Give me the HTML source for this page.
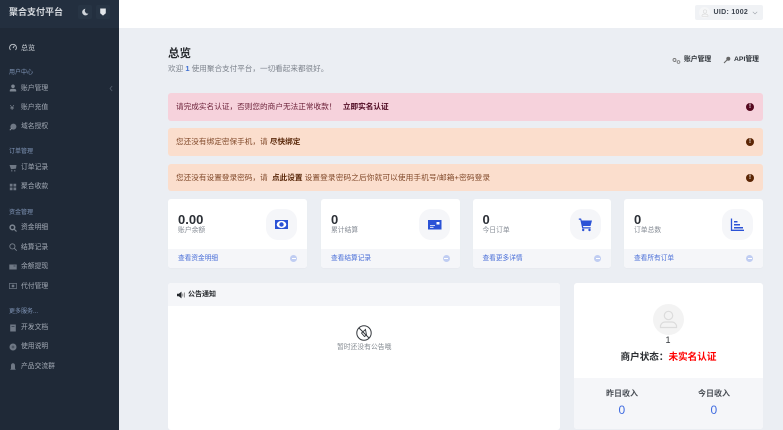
<!DOCTYPE html>
<html lang="zh-CN"><head><meta charset="utf-8"><title>总览</title>
<style>
*{box-sizing:border-box}
html,body{margin:0;padding:0;overflow:hidden}
html{height:430px}
body{width:783px;height:430px;overflow:hidden;position:relative;background:#ebeef3;font-family:"Liberation Sans","Noto Sans CJK SC",sans-serif;color:#343a40}
.a{position:absolute;white-space:nowrap;line-height:1;filter:blur(.25px)}
.side{position:absolute;left:0;top:0;width:119px;height:430px;background:#1f2937}
.brand{position:absolute;left:0;top:0;width:119px;height:28px;background:#232f3f}
.hb{position:absolute;top:5px;width:14px;height:14px;border-radius:2px;background:#273444}
.group{position:absolute;left:9px;font-size:6px;line-height:1;color:#8196b8;white-space:nowrap;filter:blur(.25px);margin-top:1px}
.item{position:absolute;left:21px;font-size:6.8px;line-height:1;color:#a3aab5;white-space:nowrap;filter:blur(.25px);margin-top:1px}
.ic{position:absolute;left:9px;width:8px;height:8px}
.alert{position:absolute;left:168px;width:595px;height:27.5px;border-radius:3px;font-size:7.65px;line-height:27.5px;padding-left:8px;white-space:nowrap}
.alert .t{filter:blur(.25px);display:inline-block}
.alert b{font-weight:700}
.red{background:#f6d2dc;color:#6b2038}
.red b{color:#4f0a22}
.org{background:#fbdecd;color:#81492a}
.org b{color:#5c2a0c}
.dot{position:absolute;right:9px;top:10px;width:8px;height:8px;border-radius:50%;color:#fff;font-size:6px;line-height:8px;text-align:center;font-weight:700}
.card{position:absolute;top:199px;height:69px;background:#fff;border-radius:3px;overflow:hidden;box-shadow:0 1px 1px rgba(0,0,0,.02)}
.card .n{position:absolute;left:10px;top:13.500px;font-size:13px;font-weight:700;color:#2b2f36;line-height:1;filter:blur(.25px)}
.card .l{position:absolute;left:10px;top:29px;font-size:6.800px;color:#858b94;line-height:1;white-space:nowrap;filter:blur(.25px)}
.card .box{position:absolute;right:10px;top:9.500px;width:31px;height:31px;border-radius:12px;background:#f5f6f9}
.card .box svg{position:absolute;left:8px;top:8px;width:15px;height:15px}
.card .f{position:absolute;left:0;right:0;top:50px;height:19px;background:#f5f6f9;font-size:6.700px;line-height:19px;padding-left:10px;color:#4a6fd8;white-space:nowrap}
.card .f span{filter:blur(.25px);display:inline-block}
.card .f i{position:absolute;right:10px;top:6px;width:7px;height:7px;border-radius:50%;background:#c0cdf2}
.card .f i:after{content:"";position:absolute;left:1.500px;top:3px;width:4px;height:1px;background:#fff}
</style></head><body>

<div style="position:absolute;left:119px;top:0;width:664px;height:28px;background:#fff"></div>

<div class="side">
<div class="brand"></div>
<div class="a" style="left:9px;top:8px;font-size:9px;font-weight:700;color:#d5d9de">聚合支付平台</div>
<div class="hb" style="left:78px"></div><div class="hb" style="left:96px"></div>
<svg class="a" style="left:81px;top:8px" width="8" height="8" viewBox="0 0 8 8"><path d="M4.500.800A3.300 3.300 0 1 0 7.400 5.600 3 3 0 0 1 4.500.800z" fill="#cfd4da"/></svg>
<svg class="a" style="left:99px;top:8px" width="8" height="8" viewBox="0 0 8 8"><path d="M1.200.500h5.600v4.700L4 7.600 1.200 5.200z" fill="#e3e6ea"/></svg>

<svg class="ic" style="top:43px" viewBox="0 0 8 8"><path d="M1.500 7A3.400 3.400 0 1 1 6.500 7" fill="none" stroke="#c4c9d0" stroke-width=".9"/><path d="M4 5l1.400-2.200" stroke="#c4c9d0" stroke-width=".9"/></svg>
<div class="item" style="top:43.500px;color:#cdd2d8;font-size:7px">总览</div>

<div class="group" style="top:69px">用户中心</div>
<svg class="ic" style="top:84px" viewBox="0 0 8 8"><circle cx="4" cy="2.300" r="1.800" fill="#7d8692"/><path d="M.800 7.500h6.400V6Q6.500 4.800 4 4.800T.800 6z" fill="#7d8692"/></svg>
<div class="item" style="top:84.500px">账户管理</div>
<svg class="a" style="left:109px;top:85px" width="4" height="7" viewBox="0 0 4 7"><path d="M3.200 1L1 3.500 3.200 6" fill="none" stroke="#56606e" stroke-width=".7"/></svg>
<div class="a" style="left:10px;top:103.500px;font-size:7.500px;color:#7d8692">¥</div>
<div class="item" style="top:103.500px">账户充值</div>
<svg class="ic" style="top:123px" viewBox="0 0 8 8"><circle cx="4.400" cy="3.600" r="3" fill="#6f7885"/><path d="M.800 7.200L3 5" stroke="#8b939e"/></svg>
<div class="item" style="top:123px">域名授权</div>

<div class="group" style="top:148px">订单管理</div>
<svg class="ic" style="top:164px" viewBox="0 0 8 8"><path d="M.500 1h7L7 4.600 2 5.300zM2.300 6h1v1.500h-1zM5.300 6h1v1.500h-1z" fill="#6f7885"/></svg>
<div class="item" style="top:163.500px">订单记录</div>
<svg class="ic" style="top:183px" viewBox="0 0 8 8"><path d="M.800.800h2.700v2.700H.800zM4.500.800h2.700v2.700H4.500zM.800 4.500h2.700v2.700H.800zM4.500 4.500h2.700v2.700H4.500z" fill="#6f7885"/></svg>
<div class="item" style="top:183px">聚合收款</div>

<div class="group" style="top:208.500px">资金管理</div>
<svg class="ic" style="top:224px" viewBox="0 0 8 8"><circle cx="3.400" cy="3.400" r="2.300" fill="none" stroke="#7d8692" stroke-width="1.500"/><path d="M5 5l2.500 2.500" stroke="#7d8692" stroke-width="1.200"/></svg>
<div class="item" style="top:224px">资金明细</div>
<svg class="ic" style="top:243px" viewBox="0 0 8 8"><circle cx="3.400" cy="3.400" r="2.600" fill="none" stroke="#7d8692" stroke-width=".8"/><path d="M5.200 5.200l2.500 2.500" stroke="#7d8692" stroke-width=".8"/></svg>
<div class="item" style="top:243.500px">结算记录</div>
<svg class="ic" style="top:263px" viewBox="0 0 8 8"><path d="M.300 1.500h7.400v5H.300z" fill="#6f7885"/><path d="M4.500 3h2" stroke="#1f2937" stroke-width=".6"/></svg>
<div class="item" style="top:263px">余额提现</div>
<svg class="ic" style="top:282px" viewBox="0 0 8 8"><path d="M.300 1.500h7.400v5H.300z" fill="none" stroke="#6f7885" stroke-width=".8"/><circle cx="4" cy="4" r="1.400" fill="#6f7885"/></svg>
<div class="item" style="top:282.500px">代付管理</div>

<div class="group" style="top:308px">更多服务...</div>
<svg class="ic" style="top:323.500px" viewBox="0 0 8 8"><path d="M1.200.500h5.600v7H1.200z" fill="#6f7885"/><path d="M2.500 2.500h3" stroke="#1f2937" stroke-width=".6"/></svg>
<div class="item" style="top:324px">开发文档</div>
<svg class="ic" style="top:343px" viewBox="0 0 8 8"><circle cx="4" cy="4" r="3.500" fill="#6f7885"/><path d="M4 2.500v3M2.500 4h3" stroke="#1f2937" stroke-width=".5"/></svg>
<div class="item" style="top:343px">使用说明</div>
<svg class="ic" style="top:362.500px" viewBox="0 0 8 8"><path d="M4 .300C5.500.300 6 1.500 6 3v2.500l.800 1.200H1.200L2 5.500V3C2 1.500 2.500.300 4 .300z" fill="#6f7885"/></svg>
<div class="item" style="top:362.500px">产品交流群</div>
</div>

<!-- top right -->
<div style="position:absolute;left:695px;top:5px;width:68px;height:15px;background:#f0f2f5;border-radius:2px"></div>
<div style="position:absolute;left:699px;top:7px;width:11px;height:11px;border-radius:50%;background:#f6f7f8"></div>
<svg class="a" style="left:700.500px;top:8.500px" width="8" height="8" viewBox="0 0 8 8"><circle cx="4" cy="2.500" r="1.700" fill="none" stroke="#dcdcdc" stroke-width=".7"/><path d="M1 7.300h6V6.300Q6 5 4 5T1 6.300z" fill="none" stroke="#dcdcdc" stroke-width=".7"/></svg>
<div class="a" style="left:713.500px;top:9px;font-size:7px;font-weight:700;color:#3f4650;letter-spacing:.3px">UID: 1002</div>
<svg class="a" style="left:752px;top:10.500px" width="6" height="4" viewBox="0 0 6 4"><path d="M.800.800L3 3 5.200.800" fill="none" stroke="#9aa0a8" stroke-width=".6"/></svg>

<!-- title -->
<div class="a" style="left:168px;top:48.500px;font-size:11.500px;font-weight:700;color:#25282c">总览</div>
<div class="a" style="left:168px;top:65px;font-size:7.600px;color:#7d838c">欢迎 <b style="color:#3f6fd0">1</b> 使用聚合支付平台，一切看起来都很好。</div>

<svg class="a" style="left:672px;top:56.500px" width="9" height="8" viewBox="0 0 9 8"><circle cx="2.500" cy="3" r="1.500" fill="none" stroke="#777" stroke-width=".9"/><circle cx="6.500" cy="5" r="1.400" fill="none" stroke="#777" stroke-width=".8"/></svg>
<div class="a" style="left:684px;top:57px;font-size:6.800px;color:#2f343a;font-weight:700">账户管理</div>
<svg class="a" style="left:723px;top:56px" width="8" height="8" viewBox="0 0 8 8"><circle cx="5.300" cy="2.700" r="2" fill="#666"/><path d="M4 4L1 7" stroke="#666" stroke-width="1.100"/></svg>
<div class="a" style="left:734px;top:57px;font-size:6.800px;color:#2f343a;font-weight:700">API管理</div>

<!-- alerts -->
<div class="alert red" style="top:93px"><span class="t">请完成实名认证，否则您的商户无法正常收款！ &nbsp; <b>立即实名认证</b></span><span class="dot" style="background:#55081f">!</span></div>
<div class="alert org" style="top:128px"><span class="t">您还没有绑定密保手机，请 <b>尽快绑定</b></span><span class="dot" style="background:#5c2605">!</span></div>
<div class="alert org" style="top:163.500px"><span class="t">您还没有设置登录密码，请 &nbsp;<b>点此设置</b> <span style="letter-spacing:.13px">设置登录密码之后你就可以使用手机号/邮箱+密码登录</span></span><span class="dot" style="background:#5c2605">!</span></div>

<!-- cards -->
<div class="card" style="left:168px;width:139px"><div class="n">0.00</div><div class="l">账户余额</div>
<div class="box"><svg viewBox="0 0 15 15"><path d="M1 3h13v9H1z" fill="#2b52d6"/><ellipse cx="7.500" cy="7.500" rx="4.800" ry="3.600" fill="#fff"/><circle cx="7.500" cy="7.500" r="2.200" fill="#2b52d6"/></svg></div>
<div class="f"><span>查看资金明细</span><i></i></div></div>
<div class="card" style="left:321px;width:138.500px"><div class="n">0</div><div class="l">累计结算</div>
<div class="box"><svg viewBox="0 0 15 15"><path d="M1 3h13.500v9.500H1z" fill="#2b52d6"/><path d="M3 8.500h5M3 10.300h3.500" stroke="#fff" stroke-width=".8"/><path d="M9.500 5h3v2.500h-3z" fill="#fff"/></svg></div>
<div class="f"><span>查看结算记录</span><i></i></div></div>
<div class="card" style="left:472.500px;width:138.500px"><div class="n">0</div><div class="l">今日订单</div>
<div class="box"><svg viewBox="0 0 15 15"><path d="M.800 1.500h2.300l.6 2H14l-1.500 5.500H5l.3 1.300h7.400v1.200H4.200L2.300 2.700H.800z" fill="#2b52d6"/><circle cx="5.200" cy="13" r="1.200" fill="#2b52d6"/><circle cx="11.500" cy="13" r="1.200" fill="#2b52d6"/></svg></div>
<div class="f"><span>查看更多详情</span><i></i></div></div>
<div class="card" style="left:624px;width:139px"><div class="n">0</div><div class="l">订单总数</div>
<div class="box"><svg viewBox="0 0 15 15"><path d="M1.500 1.500v11.800h12.500" fill="none" stroke="#2b52d6" stroke-width="1.300"/><path d="M4 4h3.500v1.500H4zM4 7h6v1.500H4zM4 10h9v1.500H4z" fill="#2b52d6"/></svg></div>
<div class="f"><span>查看所有订单</span><i></i></div></div>

<!-- notice -->
<div style="position:absolute;left:168px;top:283px;width:392px;height:147px;background:#fff;border-radius:3px;overflow:hidden">
<div style="height:23px;background:#f5f6f9"></div>
</div>
<svg class="a" style="left:177px;top:290.500px" width="9" height="8" viewBox="0 0 9 8"><path d="M0 2.800h1.800L4.500.6v6.800L1.800 5.200H0z" fill="#23272c"/><path d="M5.800 2.500v3M7.300 1.500v5" stroke="#666" stroke-width=".7"/></svg>
<div class="a" style="left:188px;top:290.500px;font-size:7px;font-weight:700;color:#25282c">公告通知</div>
<svg class="a" style="left:356px;top:325px" width="16" height="16" viewBox="0 0 16 16"><circle cx="8" cy="8" r="7.200" fill="none" stroke="#33373c" stroke-width="1"/><path d="M3 3l10 10" stroke="#33373c" stroke-width="1"/><path d="M9.500 4.500L5.500 8l3 3.500 2-1.500z" fill="none" stroke="#33373c" stroke-width=".9"/></svg>
<div class="a" style="left:337px;top:345px;font-size:6.800px;color:#82888f">暂时还没有公告哦</div>

<!-- merchant -->
<div style="position:absolute;left:574px;top:283px;width:189px;height:145.500px;background:#fff;border-radius:3px;overflow:hidden">
<div style="position:absolute;left:0;right:0;top:95px;height:51px;background:#f5f6f9"></div>
</div>
<div style="position:absolute;left:653px;top:304px;width:31px;height:31px;border-radius:50%;background:#f3f3f3"></div>
<svg class="a" style="left:658px;top:309px" width="21" height="21" viewBox="0 0 21 21"><circle cx="10.500" cy="6.500" r="4.200" fill="none" stroke="#dcdcdc" stroke-width="1.200"/><path d="M2.500 18.500h16V16.500Q17 13 14 13H7Q4 13 2.500 16.500z" fill="none" stroke="#dcdcdc" stroke-width="1.200"/></svg>
<div class="a" style="left:574px;width:189px;text-align:center;top:336px;font-size:9px;color:#33373c;padding-right:1px">1</div>
<div class="a" style="left:574px;width:189px;text-align:center;top:352.500px;font-size:9.600px;font-weight:700;color:#2a2d31">商户状态：<span style="color:#f00">未实名认证</span></div>
<div class="a" style="left:606px;top:389.500px;font-size:8px;font-weight:700;color:#4a4f56">昨日收入</div>
<div class="a" style="left:698px;top:389.500px;font-size:8px;font-weight:700;color:#4a4f56">今日收入</div>
<div class="a" style="left:618.500px;top:404px;font-size:12px;color:#3f6be0">0</div>
<div class="a" style="left:710.500px;top:404px;font-size:12px;color:#3f6be0">0</div>
</body></html>
